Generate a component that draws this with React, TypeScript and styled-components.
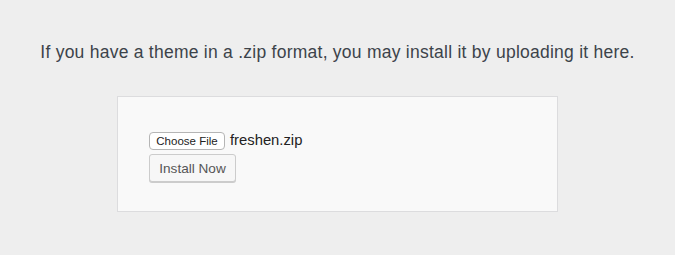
import styled, { createGlobalStyle } from "styled-components";

const GlobalStyle = createGlobalStyle`
  html, body {
    margin: 0;
    padding: 0;
    background: #eeeeee;
    font-family: "Liberation Sans", Arial, sans-serif;
  }
`;

const Page = styled.div`
  width: 675px;
  height: 255px;
  display: flex;
  flex-direction: column;
  align-items: center;
  box-sizing: border-box;
  padding-top: 40px;
`;

const Intro = styled.p`
  margin: 0;
  font-size: 17.5px;
  letter-spacing: 0.25px;
  line-height: 24px;
  color: #3c434a;
`;

const UploadBox = styled.div`
  margin-top: 32px;
  width: 441px;
  height: 116px;
  box-sizing: border-box;
  background: #f9f9f9;
  border: 1px solid #dcdcde;
  padding: 35px 31px 0;
  display: flex;
  flex-direction: column;
  align-items: flex-start;
  gap: 4px;
`;

const FileRow = styled.div`
  display: flex;
  align-items: center;
  gap: 5px;
`;

const ChooseButton = styled.button`
  width: 76px;
  height: 18px;
  padding: 0;
  box-sizing: border-box;
  background: #ffffff;
  border: 1px solid #b5b5b5;
  border-radius: 4px;
  font-family: "Liberation Sans", Arial, sans-serif;
  font-size: 11.5px;
  color: #222;
  line-height: 16px;
`;

const FileName = styled.span`
  font-size: 14.8px;
  color: #222;
  margin-top: -3px;
`;

const InstallButton = styled.button`
  width: 87px;
  height: 28px;
  box-sizing: border-box;
  padding: 0;
  background: #f7f7f7;
  border: 1px solid #cccccc;
  border-radius: 3px;
  box-shadow: 0 1px 0 #cccccc;
  font-family: "Liberation Sans", Arial, sans-serif;
  font-size: 13.6px;
  color: #555555;
`;

export default function App() {
  return (
    <>
      <GlobalStyle />
      <Page>
        <Intro>
          If you have a theme in a .zip format, you may install it by uploading
          it here.
        </Intro>
        <UploadBox>
          <FileRow>
            <ChooseButton>Choose File</ChooseButton>
            <FileName>freshen.zip</FileName>
          </FileRow>
          <InstallButton>Install Now</InstallButton>
        </UploadBox>
      </Page>
    </>
  );
}
